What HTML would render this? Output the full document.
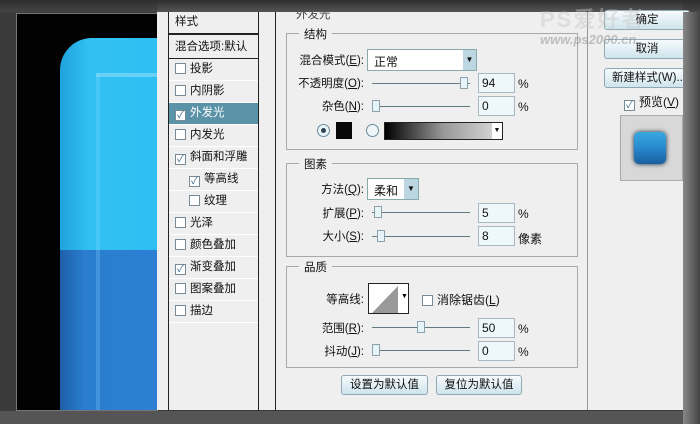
<!DOCTYPE html>
<html><head><meta charset="utf-8">
<style>
*{margin:0;padding:0;box-sizing:border-box}
body{width:700px;height:424px;overflow:hidden;background:#3a3a3a;position:relative;font-family:"Liberation Sans","Noto Sans CJK SC",sans-serif;font-size:12px;color:#111}
.a{position:absolute}
.dlg{left:157px;top:12px;width:526px;height:398px;background:#efefef}
.row{position:absolute;left:169px;width:89px;height:22px;border-bottom:1px solid #fff;line-height:21px;padding-left:6px;font-size:11.5px}
.cb{display:inline-block;width:11px;height:11px;border:1px solid #7a8a94;background:#fff;vertical-align:-2px;margin-right:4px;font-size:10px;line-height:9px;text-align:center;color:#3a6a8a}
.box{position:absolute;border:1px solid #a8a8a8}
.lg{position:absolute;background:#efefef;padding:0 5px;font-size:11.5px;top:-8px;left:12px}
.lbl{position:absolute;text-align:right;font-size:11.5px}
.inp{position:absolute;background:#eef8fb;border:1px solid #a9b8c0;height:20px;width:37px;padding-left:3px;line-height:18px;font-size:12px}
.sl{position:absolute;height:1px;background:#607880;width:98px}
.th{position:absolute;width:8px;height:12px;background:#e6f3f7;border:1px solid #8aa0aa;top:-6px}
.btn{position:absolute;height:20px;border:1px solid #8ea8b4;border-radius:3px;background:linear-gradient(#f6fbfd,#cfe4ec);text-align:center;line-height:18px;font-size:11.5px}
</style></head><body>
<div class="a" style="left:0;top:0;width:700px;height:12px;background:linear-gradient(#2e2e2e,#444)"></div>
<div class="a" style="left:16px;top:13px;width:142px;height:398px;background:#020202;border:1px solid #777"></div>
<div class="a" style="left:60px;top:38px;width:97px;height:212px;background:linear-gradient(90deg,#1fa3dc,#32c0f2 30%,#30bff2);border-radius:32px 0 0 0"></div>
<div class="a" style="left:60px;top:250px;width:97px;height:160px;background:linear-gradient(90deg,#1e5fa8,#2a7dd0 25%,#2c7fd2)"></div>
<div class="a" style="left:96px;top:75px;width:4px;height:335px;background:rgba(140,220,255,.25)"></div>
<div class="a" style="left:96px;top:73px;width:61px;height:4px;background:rgba(170,230,255,.45)"></div>
<div class="a dlg"></div>
<div class="a" style="left:168px;top:12px;width:91px;height:398px;border-left:1px solid #222;border-right:1px solid #222"></div>
<div class="a" style="left:275px;top:12px;width:1px;height:398px;background:#222"></div>
<div class="a" style="left:587px;top:12px;width:1px;height:398px;background:#999"></div>
<div class="row" style="top:12px;height:23px;border-bottom:2px solid #222">样式</div>
<div class="row" style="top:37px;border-bottom:1px solid #222">混合选项:默认</div>
<div class="row" style="top:59px"><span class="cb"></span>投影</div>
<div class="row" style="top:81px"><span class="cb"></span>内阴影</div>
<div class="row" style="top:103px;background:#5a92a8;color:#fff"><span class="cb">✓</span>外发光</div>
<div class="row" style="top:125px"><span class="cb"></span>内发光</div>
<div class="row" style="top:147px"><span class="cb">✓</span>斜面和浮雕</div>
<div class="row" style="top:169px;padding-left:20px"><span class="cb">✓</span>等高线</div>
<div class="row" style="top:191px;padding-left:20px"><span class="cb"></span>纹理</div>
<div class="row" style="top:213px"><span class="cb"></span>光泽</div>
<div class="row" style="top:235px"><span class="cb"></span>颜色叠加</div>
<div class="row" style="top:257px"><span class="cb">✓</span>渐变叠加</div>
<div class="row" style="top:279px"><span class="cb"></span>图案叠加</div>
<div class="row" style="top:301px"><span class="cb"></span>描边</div>
<div class="a" style="left:296px;top:6px;font-size:11.5px;color:#444">外发光</div>
<div class="a" style="left:157px;top:0;width:526px;height:12px;background:linear-gradient(#2e2e2e,#555)"></div>

<div class="box" style="left:286px;top:33px;width:292px;height:117px"><span class="lg">结构</span></div>
<div class="lbl" style="left:290px;width:74px;top:52px">混合模式(<u>E</u>):</div>
<div class="a" style="left:367px;top:49px;width:110px;height:22px;background:#fff;border:1px solid #8aa;padding:3px 6px">正常</div>
<div class="a" style="left:463px;top:50px;width:13px;height:20px;background:#bcd6e2;font-size:8px;text-align:center;line-height:20px">▼</div>
<div class="lbl" style="left:290px;width:74px;top:75px">不透明度(<u>O</u>):</div>
<div class="sl" style="left:372px;top:83px"><div class="th" style="left:88px"></div></div>
<div class="inp" style="left:478px;top:73px">94</div><div class="a" style="left:518px;top:77px">%</div>
<div class="lbl" style="left:290px;width:74px;top:98px">杂色(<u>N</u>):</div>
<div class="sl" style="left:372px;top:106px"><div class="th" style="left:0"></div></div>
<div class="inp" style="left:478px;top:96px">0</div><div class="a" style="left:518px;top:100px">%</div>
<div class="a" style="left:317px;top:124px;width:13px;height:13px;border-radius:50%;border:1px solid #6a8a9a;background:#e8f4f8"><div class="a" style="left:3px;top:3px;width:5px;height:5px;border-radius:50%;background:#345"></div></div>
<div class="a" style="left:336px;top:122px;width:16px;height:17px;background:#080808"></div>
<div class="a" style="left:366px;top:124px;width:13px;height:13px;border-radius:50%;border:1px solid #6a8a9a;background:#eef6f9"></div>
<div class="a" style="left:384px;top:122px;width:119px;height:18px;border:1px solid #222;background:linear-gradient(90deg,#000,#999 50%,#ddd)"></div>
<div class="a" style="left:492px;top:123px;width:10px;height:16px;background:#fff;font-size:7px;text-align:center;line-height:16px">▼</div>

<div class="box" style="left:286px;top:163px;width:292px;height:94px"><span class="lg">图素</span></div>
<div class="lbl" style="left:290px;width:74px;top:181px">方法(<u>Q</u>):</div>
<div class="a" style="left:367px;top:178px;width:52px;height:22px;background:#fff;border:1px solid #8aa;padding:3px 6px">柔和</div>
<div class="a" style="left:404px;top:179px;width:14px;height:20px;background:#bcd6e2;font-size:8px;text-align:center;line-height:20px">▼</div>
<div class="lbl" style="left:290px;width:74px;top:205px">扩展(<u>P</u>):</div>
<div class="sl" style="left:372px;top:212px"><div class="th" style="left:2px"></div></div>
<div class="inp" style="left:478px;top:203px">5</div><div class="a" style="left:518px;top:207px">%</div>
<div class="lbl" style="left:290px;width:74px;top:228px">大小(<u>S</u>):</div>
<div class="sl" style="left:372px;top:236px"><div class="th" style="left:5px"></div></div>
<div class="inp" style="left:478px;top:226px">8</div><div class="a" style="left:518px;top:230px">像素</div>

<div class="box" style="left:286px;top:266px;width:292px;height:102px"><span class="lg">品质</span></div>
<div class="lbl" style="left:290px;width:74px;top:291px">等高线:</div>
<div class="a" style="left:368px;top:283px;width:41px;height:31px;border:1px solid #222;background:#fff;overflow:hidden"><svg width="41" height="31"><polygon points="3,29 29,2 29,29" fill="#999"/><text x="32" y="14" font-size="7">▼</text></svg></div>
<div class="a" style="left:422px;top:291px"><span class="cb"></span>消除锯齿(<u>L</u>)</div>
<div class="lbl" style="left:290px;width:74px;top:320px">范围(<u>R</u>):</div>
<div class="sl" style="left:372px;top:327px"><div class="th" style="left:45px"></div></div>
<div class="inp" style="left:478px;top:318px">50</div><div class="a" style="left:518px;top:322px">%</div>
<div class="lbl" style="left:290px;width:74px;top:343px">抖动(<u>J</u>):</div>
<div class="sl" style="left:372px;top:350px"><div class="th" style="left:0"></div></div>
<div class="inp" style="left:478px;top:341px">0</div><div class="a" style="left:518px;top:345px">%</div>
<div class="btn" style="left:341px;top:375px;width:87px">设置为默认值</div>
<div class="btn" style="left:436px;top:375px;width:86px">复位为默认值</div>

<div class="btn" style="left:604px;top:10px;width:86px">确定</div>
<div class="btn" style="left:604px;top:39px;width:86px">取消</div>
<div class="btn" style="left:604px;top:68px;width:90px">新建样式(W)...</div>
<div class="a" style="left:624px;top:93px"><span class="cb">✓</span>预览(<u>V</u>)</div>
<div class="a" style="left:620px;top:115px;width:63px;height:66px;background:#d8d8d8;border:1px solid #aaa"></div>
<div class="a" style="left:634px;top:132px;width:32px;height:32px;border-radius:5px;background:linear-gradient(#3aa8e0,#2a8cd0 45%,#1a5fa0);box-shadow:0 0 5px #123"></div>
<div class="a" style="left:683px;top:12px;width:17px;height:412px;background:linear-gradient(90deg,#888,#444)"></div>
<div class="a" style="left:0;top:411px;width:683px;height:13px;background:#555"></div>
<div class="a" style="left:540px;top:2px;font-size:22px;font-weight:bold;color:rgba(200,200,200,.45);letter-spacing:2px">PS爱好者</div>
<div class="a" style="left:540px;top:32px;font-size:13px;font-style:italic;font-weight:bold;color:rgba(140,140,140,.5)">www.ps2000.cn</div>
</body></html>
